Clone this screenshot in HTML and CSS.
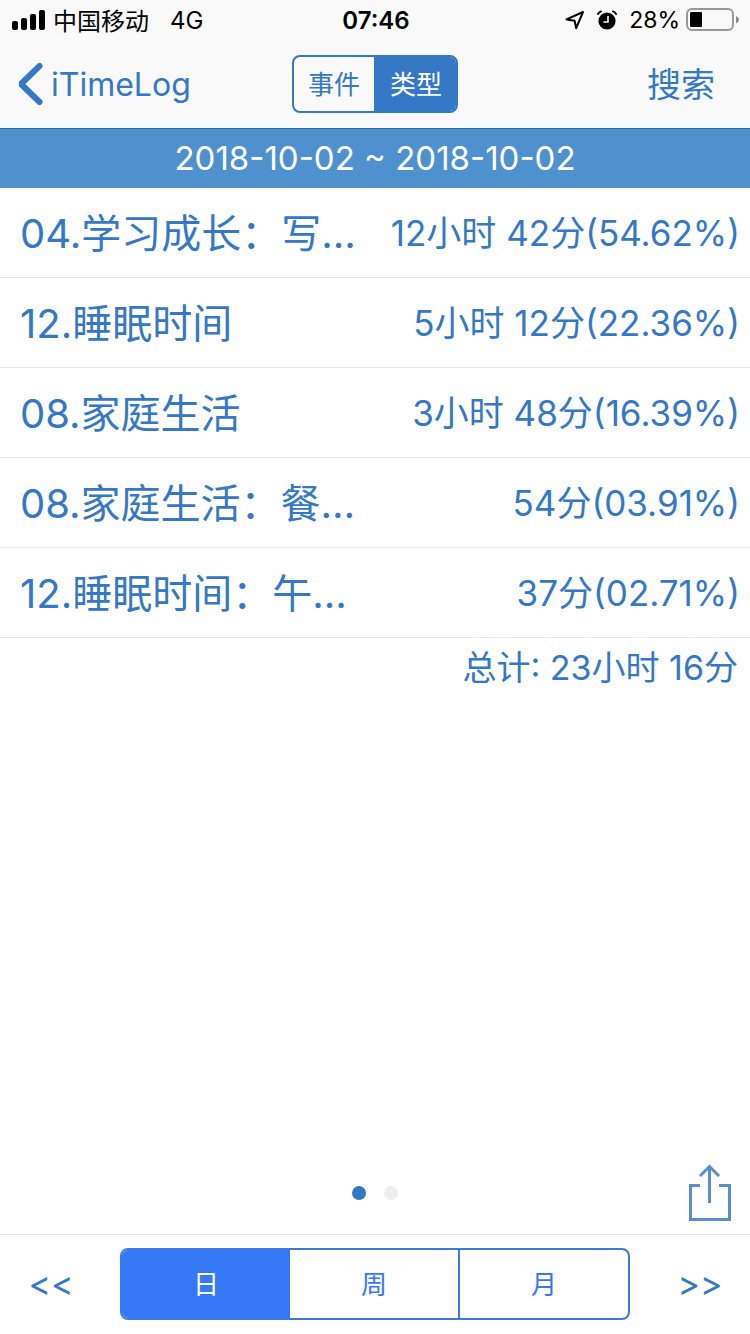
FILE: index.html
```html
<!DOCTYPE html>
<html lang="zh-CN">
<head>
  <meta charset="UTF-8" />
  <meta name="viewport" content="width=device-width,initial-scale=1" />
  <title>iTimeLog</title>
  <link rel="stylesheet" href="styles.css">
</head>
<body>

  <!-- Status Bar -->
  <div class="status-bar">
    <div class="status-left">
      <svg class="signal" width="34" height="20" viewBox="0 0 34 20">
        <rect x="0" y="11" width="6" height="9" rx="2"/>
        <rect x="9" y="8" width="6" height="12" rx="2"/>
        <rect x="18" y="4" width="6" height="16" rx="2"/>
        <rect x="27" y="0" width="6" height="20" rx="2"/>
      </svg>
      <span class="carrier">中国移动</span>
      <span>4G</span>
    </div>
    <div class="status-time">07:46</div>
    <div class="status-right">
      <svg width="20" height="20" viewBox="0 0 20 20">
        <path d="M1.5 9.4 L18 2 L11.2 18.2 L9.6 10.8 Z" fill="none" stroke="#000" stroke-width="2" stroke-linejoin="round"/>
      </svg>
      <svg class="alarm" width="20" height="20" viewBox="0 0 20 20">
        <circle cx="10" cy="11" r="8.6"/>
        <path d="M1 4 Q2 2 4 1.4 M19 4 Q18 2 16 1.4" fill="none" stroke="#000" stroke-width="2" stroke-linecap="round"/>
        <path d="M11 6 V12 H6.5" fill="none" stroke="#f9f9f9" stroke-width="1.6"/>
      </svg>
      <span class="percent">28%</span>
      <svg class="battery" width="54" height="24" viewBox="0 0 54 24">
        <rect x="1" y="1" width="46" height="21" rx="5" fill="none" stroke="#999" stroke-width="2"/>
        <rect x="4" y="4" width="12" height="15" rx="1"/>
        <path d="M50 8 Q53 9.5 53 11.5 Q53 13.5 50 15.5 Z" fill="#888"/>
      </svg>
    </div>
  </div>

  <!-- Nav -->
  <header class="navbar">
    <button class="back">
      <svg width="26" height="42" viewBox="0 0 26 42">
        <path d="M22.5 3 L4 21 L22.5 39" fill="none" stroke="currentColor" stroke-width="6" stroke-linecap="round" stroke-linejoin="bevel"/>
      </svg>
      <span>iTimeLog</span>
    </button>
    <div class="segment segment-small">
      <button>事件</button>
      <button class="active">类型</button>
    </div>
    <button class="search">搜索</button>
  </header>

  <div class="date-range">2018-10-02 ~ 2018-10-02</div>

  <!-- Time Log -->
  <main>
    <ul class="log-list">
      <li><span class="log-name">04.学习成长：写…</span><span class="log-time">12小时 42分(54.62%)</span></li>
      <li><span class="log-name">12.睡眠时间</span><span class="log-time">5小时 12分(22.36%)</span></li>
      <li><span class="log-name">08.家庭生活</span><span class="log-time">3小时 48分(16.39%)</span></li>
      <li><span class="log-name">08.家庭生活：餐…</span><span class="log-time">54分(03.91%)</span></li>
      <li><span class="log-name">12.睡眠时间：午…</span><span class="log-time">37分(02.71%)</span></li>
    </ul>
    <p class="total">总计: 23小时 16分</p>
  </main>

  <!-- Pager -->
  <div class="pager">
    <div class="dots">
      <span class="dot active"></span>
      <span class="dot"></span>
    </div>
    <button class="share" aria-label="分享">
      <svg width="42" height="58" viewBox="0 0 42 58">
        <path d="M11 21.5 H1.5 V55.5 H40.5 V21.5 H30 M20.5 39 V3 M11 12 L20.5 2.5 L30 12" fill="none" stroke="currentColor" stroke-width="3"/>
      </svg>
    </button>
  </div>

  <!-- Toolbar -->
  <footer class="toolbar">
    <button class="step">&lt;&lt;</button>
    <div class="segment segment-large">
      <button class="active">日</button>
      <button>周</button>
      <button>月</button>
    </div>
    <button class="step">&gt;&gt;</button>
  </footer>

</body>
</html>
```
FILE: styles.css
```css
/* RESET & GLOBAL */
* { margin:0; padding:0; box-sizing:border-box; }
body {
  min-height:100vh; display:flex; flex-direction:column;
  font-family:Inter, "Noto Sans CJK SC", sans-serif;
  background:#fff; color:#3478c6;
}
button {
  background:none; border:none; color:inherit;
  font-family:inherit; cursor:pointer;
}
svg { display:block; flex:none; }

/* STATUS BAR */
.status-bar {
  display:grid; grid-template-columns:1fr auto 1fr; align-items:center;
  height:40px; padding:0 10px 0 12px;
  background:#f9f9f9; color:#000; font-size:24px;
}
.status-left, .status-right { display:flex; align-items:center; }
.status-left { gap:7px; }
.carrier { margin-right:14px; padding-bottom:2px; }
.status-time { font-weight:600; }
.status-right { justify-content:flex-end; gap:12px; }
.percent { font-size:23px; }
.battery { margin-left:-6px; }

/* NAVBAR */
.navbar {
  display:grid; grid-template-columns:1fr auto 1fr; align-items:center;
  height:88px; background:#f9f9f9;
}
.back {
  display:flex; align-items:center; gap:8px;
  justify-self:start; padding-left:17px; font-size:32px;
}
.search { justify-self:end; padding:0 35px 4px 0; font-size:34px; }

/* SEGMENTS */
.segment {
  display:flex; overflow:hidden;
  border:2px solid #3478c6; border-radius:8px;
}
.segment button { flex:1; padding-bottom:3px; font-size:26px; }
.segment button + button { border-left:2px solid #3478c6; }
.segment .active { background:#3478c6; color:#fff; }
.segment-small { width:166px; height:58px; }
.segment-large { flex:1; height:72px; color:#3478f6; border-color:#3e78dc; }
.segment-large:has(.active:first-child) { border-left-color:#3478f6; }
.segment-large button + button { border-color:#3e78dc; }
.segment-large .active { background:#3478f6; }
.segment-large .active + button { border-left:none; }

/* DATE */
.date-range {
  height:60px; line-height:58px; text-align:center;
  background:#4f90cf; border-top:1px solid #2f6aa8;
  color:#fff; font-size:33px;
}

/* LIST */
.log-list { list-style:none; }
.log-list li {
  display:flex; align-items:center; justify-content:space-between;
  height:90px; padding:0 10px 4px 20px;
  border-bottom:1px solid #e8e8e8;
}
.log-name { font-size:40px; white-space:nowrap; }
.log-time { font-size:35px; white-space:nowrap; }
.total {
  padding:0 12px; line-height:60px;
  text-align:right; font-size:34px;
}

/* PAGER */
.pager {
  display:grid; grid-template-columns:1fr auto 1fr; align-items:center;
  height:82px; margin-top:auto; padding:0 19px;
}
.dots { grid-column:2; display:flex; gap:18px; }
.dot { width:14px; height:14px; border-radius:50%; background:#eee; }
.dot.active { background:#3478c6; }
.share { justify-self:end; color:#5a8dd0; }

/* TOOLBAR */
.toolbar {
  display:flex; align-items:center;
  height:100px; padding-bottom:2px; border-top:1px solid #e8e8e8;
}
.step { width:120px; padding-right:18px; font-size:34px; }
.step:last-child { padding:0 0 0 20px; }
```
